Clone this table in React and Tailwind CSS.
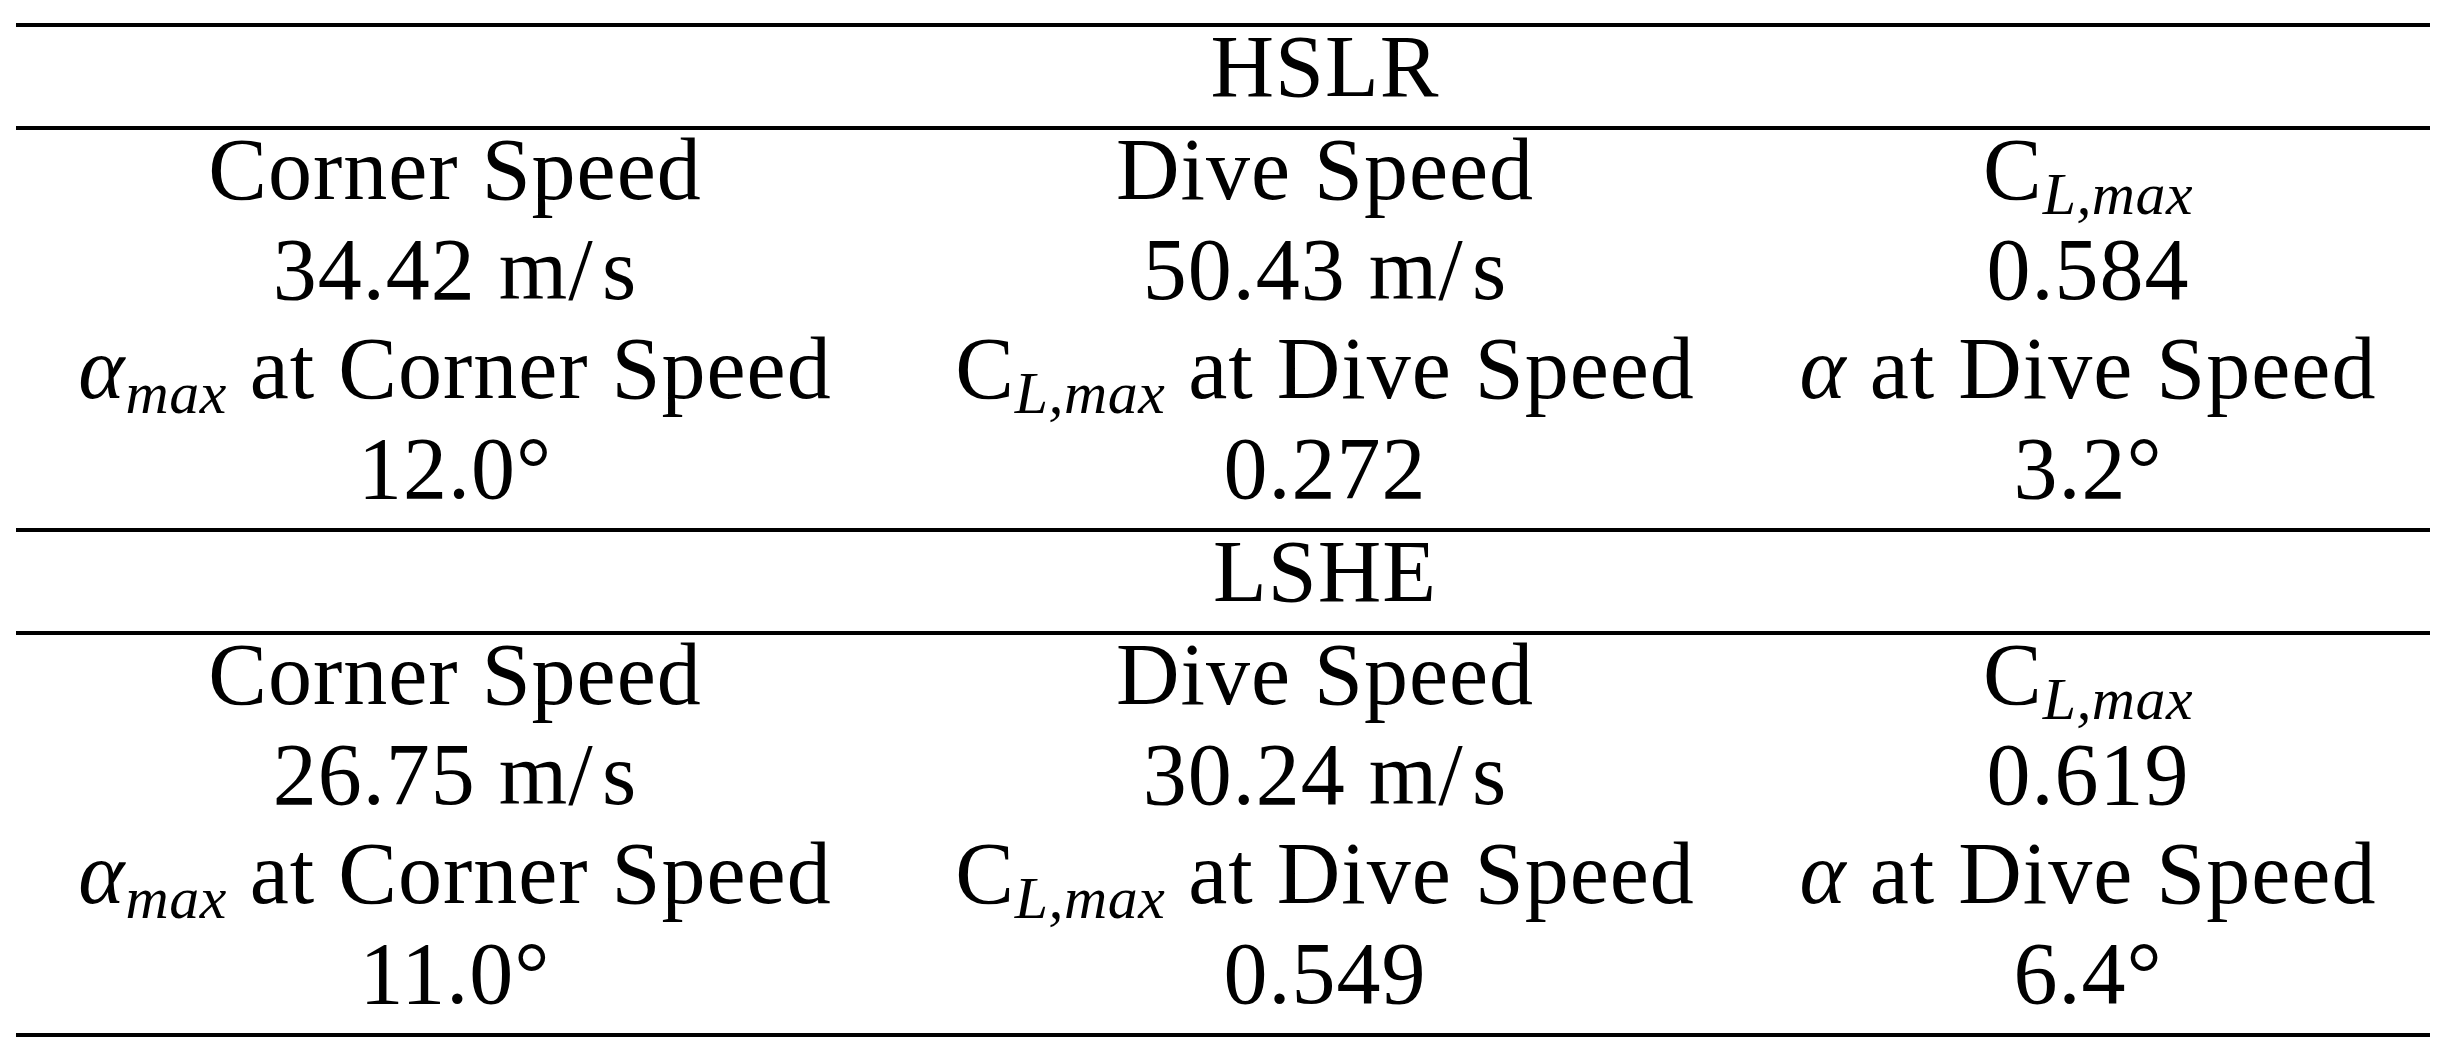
import React from "react";

const Line = () => <div className="h-[4px] bg-black" />;

const Sub = ({ children }) => (
  <sub className="italic text-[0.68em] tracking-[0.5px]">{children}</sub>
);

const Alpha = ({ sub }) => (
  <span>
    <span className="italic">α</span>
    {sub ? <Sub>{sub}</Sub> : null}
  </span>
);

const CL = () => (
  <span>
    <span>C</span>
    <Sub>L,max</Sub>
  </span>
);

const Cell = ({ children }) => (
  <div className="h-[99.5px] leading-[80px] text-center whitespace-nowrap">{children}</div>
);

const HeadRow = ({ label }) => (
  <div className="grid grid-cols-[878px_862px_664px] h-[99px] leading-[80px] text-center">
    <div />
    <div>{label}</div>
    <div />
  </div>
);

const Block = ({ d }) => (
  <div className="grid grid-cols-[878px_862px_664px]">
    <Cell>Corner Speed</Cell>
    <Cell>Dive Speed</Cell>
    <Cell>
      <CL />
    </Cell>
    <Cell>{d[0]} m/{"\u200a"}s</Cell>
    <Cell>{d[1]} m/{"\u200a"}s</Cell>
    <Cell>{d[2]}</Cell>
    <Cell>
      <Alpha sub="max" /> at Corner Speed
    </Cell>
    <Cell>
      <CL /> at Dive Speed
    </Cell>
    <Cell>
      <Alpha /> at Dive Speed
    </Cell>
    <Cell>{d[3]}°</Cell>
    <Cell>{d[4]}</Cell>
    <Cell>{d[5]}°</Cell>
  </div>
);

export default function App() {
  return (
    <div className="w-[2445px] h-[1058px] bg-white text-black pt-[23px] pl-[16px] font-['Liberation_Serif','Times_New_Roman',serif] text-[88px] tracking-[1px] overflow-hidden">
      <div className="w-[2414px]">
        <Line />
        <HeadRow label="HSLR" />
        <Line />
        <Block d={["34.42", "50.43", "0.584", "12.0", "0.272", "3.2"]} />
        <Line />
        <HeadRow label="LSHE" />
        <Line />
        <Block d={["26.75", "30.24", "0.619", "11.0", "0.549", "6.4"]} />
        <Line />
      </div>
    </div>
  );
}
